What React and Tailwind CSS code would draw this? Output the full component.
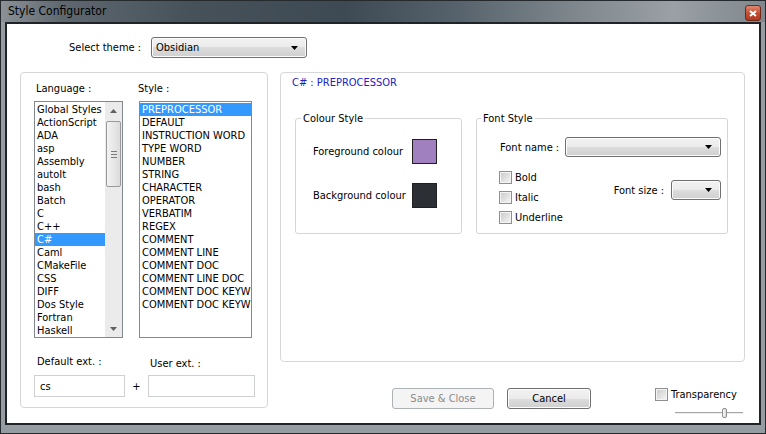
import React from "react";

const languages = [
  "Global Styles",
  "ActionScript",
  "ADA",
  "asp",
  "Assembly",
  "autoIt",
  "bash",
  "Batch",
  "C",
  "C++",
  "C#",
  "Caml",
  "CMakeFile",
  "CSS",
  "DIFF",
  "Dos Style",
  "Fortran",
  "Haskell",
];

const styles = [
  "PREPROCESSOR",
  "DEFAULT",
  "INSTRUCTION WORD",
  "TYPE WORD",
  "NUMBER",
  "STRING",
  "CHARACTER",
  "OPERATOR",
  "VERBATIM",
  "REGEX",
  "COMMENT",
  "COMMENT LINE",
  "COMMENT DOC",
  "COMMENT LINE DOC",
  "COMMENT DOC KEYWORD",
  "COMMENT DOC KEYWORD ERROR",
];

const Arrow = () => (
  <svg width="7" height="4" viewBox="0 0 7 4">
    <path d="M0 0H7L3.5 4Z" fill="#000" />
  </svg>
);

const Combo = ({ className = "", text = "" }) => (
  <div
    className={`flex items-center justify-between rounded-[3px] border border-[#707070] bg-[linear-gradient(#f2f2f2_0%,#ebebeb_50%,#dddddd_50%,#cfcfcf_100%)] shadow-[inset_0_0_0_1px_#fcfcfc] pl-[4px] pr-[8px] ${className}`}
  >
    <span>{text}</span>
    <Arrow />
  </div>
);

const Check = ({ label }) => (
  <div className="flex items-center gap-[3px] h-[13px]">
    <span className="block w-[13px] h-[13px] border border-[#8e8f8f] bg-[linear-gradient(135deg,#c9c9c9,#f6f6f6)] shadow-[inset_0_0_0_1px_#f4f4f4]" />
    <span>{label}</span>
  </div>
);

const Scrollbar = () => (
  <div className="flex flex-col w-[17px] h-full bg-[#ebebeb]">
    <div className="flex items-center justify-center h-[17px]">
      <svg width="7" height="4" viewBox="0 0 7 4">
        <path d="M0 4H7L3.5 0Z" fill="#606060" />
      </svg>
    </div>
    <div className="mt-[2px] mx-[1px] h-[66px] flex flex-col items-center justify-center gap-[2px] rounded-[2px] border border-[#9a9a9a] bg-[linear-gradient(90deg,#f3f3f3,#dcdcdc)]">
      <span className="block w-[6px] h-[1px] bg-[#7a7a7a]" />
      <span className="block w-[6px] h-[1px] bg-[#7a7a7a]" />
      <span className="block w-[6px] h-[1px] bg-[#7a7a7a]" />
    </div>
    <div className="flex-1" />
    <div className="flex items-center justify-center h-[17px]">
      <svg width="7" height="4" viewBox="0 0 7 4">
        <path d="M0 0H7L3.5 4Z" fill="#606060" />
      </svg>
    </div>
  </div>
);

export default function App() {
  return (
    <div className="w-[766px] h-[434px] flex flex-col border border-[#252a2e] bg-[#959ca2] text-[11px] leading-[13px] text-black font-['DejaVu_Sans_Condensed','DejaVu_Sans',sans-serif] font-stretch-condensed">
      {/* title bar */}
      <div className="h-[21px] flex items-center justify-between pl-[7px] pr-[4px] bg-[linear-gradient(90deg,#8b9196_0%,#5f686f_8%,#46515a_25%,#3e4a53_45%,#57636c_60%,#7f878d_75%,#9aa0a5_88%,#7f878d_100%)]">
        <span className="text-[12px]">Style Configurator</span>
        <div className="flex items-center justify-center w-[16px] h-[16px] mt-[3px] rounded-[3px] border border-[#6e2a1c] bg-[linear-gradient(#e08a72,#c24a30_55%,#b03a22)]">
          <svg width="8" height="7" viewBox="0 0 8 7">
            <path d="M1 1L7 6M7 1L1 6" stroke="#fff" strokeWidth="2" />
          </svg>
        </div>
      </div>

      {/* client area */}
      <div className="flex-1 pl-[4px] pr-[4px] pb-[8px]">
        <div className="h-full border-2 border-[#1f2428] bg-white flex flex-col">
          {/* theme row */}
          <div className="flex items-center mt-[13px] pl-[62px]">
            <span className="w-[82px]">Select theme :</span>
            <Combo className="w-[156px] h-[21px]" text="Obsidian" />
          </div>

          <div className="flex mt-[14px] pl-[13px]">
            {/* left group */}
            <div className="flex flex-col w-[248px] h-[336px] border border-[#d7d7d7] rounded-[4px] pl-[13px] pt-[9px]">
              <div className="flex h-[13px]">
                <span className="w-[104px] pl-[2px]">Language :</span>
                <span>Style :</span>
              </div>
              <div className="flex gap-[16px] mt-[6px]">
                <div className="flex w-[89px] h-[237px] border border-[#828790] bg-white overflow-hidden">
                  <div className="flex-1 flex flex-col pt-[1px] overflow-hidden">
                    {languages.map((l) => (
                      <div
                        key={l}
                        className={`h-[13px] pl-[2px] whitespace-nowrap ${
                          l === "C#" ? "bg-[#3399ff] text-white" : ""
                        }`}
                      >
                        {l}
                      </div>
                    ))}
                  </div>
                  <Scrollbar />
                </div>
                <div className="flex flex-col w-[113px] h-[237px] border border-[#828790] bg-white pt-[1px] overflow-hidden">
                  {styles.map((s, i) => (
                    <div
                      key={s}
                      className={`h-[13px] pl-[2px] whitespace-nowrap ${
                        i === 0 ? "bg-[#3399ff] text-white" : ""
                      }`}
                    >
                      {s}
                    </div>
                  ))}
                </div>
              </div>
              <div className="flex mt-[17px] h-[13px]">
                <span className="w-[114px] pl-[3px]">Default ext. :</span>
                <span className="pl-[2px] mt-[2px]">User ext. :</span>
              </div>
              <div className="flex items-center mt-[7px]">
                <div className="flex items-center w-[91px] h-[22px] border border-[#cfd0d4] pl-[5px]">cs</div>
                <span className="w-[23px] text-center">+</span>
                <div className="w-[107px] h-[22px] border border-[#cfd0d4]" />
              </div>
            </div>

            {/* right column */}
            <div className="flex flex-col ml-[12px] w-[465px]">
              <div className="flex flex-col h-[290px] border border-[#d7d7d7] rounded-[4px] pt-[3px] pl-[11px]">
                <span className="text-[#2222c4]">C# : PREPROCESSOR</span>
                <div className="flex mt-[23px] pl-[3px]">
                  <fieldset className="w-[167px] h-[122px] border border-[#d5d5d5] rounded-[3px] px-[5px]">
                    <legend className="px-[2px]">Colour Style</legend>
                    <div className="flex flex-col pl-[12px]">
                      <div className="flex items-center mt-[14px] h-[25px]">
                        <span className="w-[99px]">Foreground colour</span>
                        <span className="block w-[25px] h-[25px] border border-[#202020] bg-[#a080bf]" />
                      </div>
                      <div className="flex items-center mt-[19px] h-[25px]">
                        <span className="w-[99px]">Background colour</span>
                        <span className="block w-[25px] h-[25px] border border-[#202020] bg-[#2c2f33]" />
                      </div>
                    </div>
                  </fieldset>
                  <fieldset className="ml-[14px] w-[252px] h-[122px] border border-[#d5d5d5] rounded-[3px] px-[4px]">
                    <legend className="px-[2px]">Font Style</legend>
                    <div className="flex flex-col pl-[18px] pr-[2px]">
                      <div className="flex items-center mt-[12px] h-[20px]">
                        <span className="w-[66px] pl-[1px]">Font name :</span>
                        <Combo className="w-[156px] h-[20px]" />
                      </div>
                      <div className="flex items-start">
                        <div className="flex flex-col gap-[7px] mt-[14px]">
                          <Check label="Bold" />
                          <Check label="Italic" />
                          <Check label="Underline" />
                        </div>
                        <div className="flex items-center gap-[7px] ml-auto mt-[23px]">
                          <span>Font size :</span>
                          <Combo className="w-[50px] h-[20px]" />
                        </div>
                      </div>
                    </div>
                  </fieldset>
                </div>
              </div>

              {/* bottom bar */}
              <div className="flex items-start mt-[26px]">
                <div className="flex items-center justify-center ml-[112px] w-[102px] h-[21px] rounded-[3px] border border-[#adb2b5] bg-[#f4f4f4] text-[#8a8a8a]">
                  Save &amp; Close
                </div>
                <div className="flex items-center justify-center ml-[13px] w-[84px] h-[21px] rounded-[3px] border border-[#707070] bg-[linear-gradient(#f2f2f2_0%,#ebebeb_50%,#dddddd_50%,#cfcfcf_100%)] shadow-[inset_0_0_0_1px_#fcfcfc]">
                  Cancel
                </div>
                <div className="flex flex-col ml-[64px]">
                  <Check label="Transparency" />
                  <div className="relative ml-[20px] mt-[6px] w-[68px] h-[12px]">
                    <div className="absolute left-0 right-0 top-[5px] h-[2px] border-t border-[#a5a5a5] bg-[#eeeeee]" />
                    <div className="absolute left-[47px] top-[1px] w-[5px] h-[10px] rounded-[2px] border border-[#8d8d8d] bg-[linear-gradient(90deg,#fafafa,#dadada)]" />
                  </div>
                </div>
              </div>
            </div>
          </div>
        </div>
      </div>
    </div>
  );
}
